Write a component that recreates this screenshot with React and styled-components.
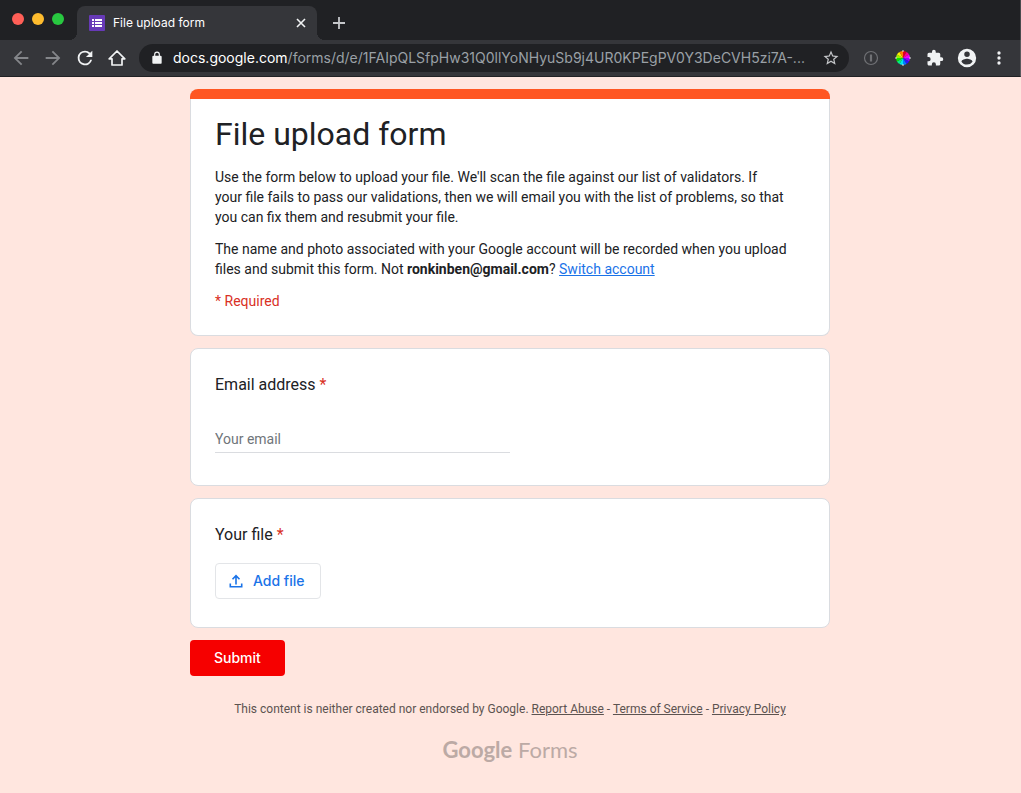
import React from "react";
import styled, { createGlobalStyle } from "styled-components";

const GlobalStyle = createGlobalStyle`
  *, *::before, *::after { box-sizing: border-box; }
  body {
    margin: 0;
    background: #ffe6df;
    color: #202124;
    font-family: Roboto, "Liberation Sans", sans-serif;
    font-size: 14px;
    line-height: 20px;
  }
  h1, h2, p { margin: 0; font-weight: 400; }
  button, input { font: inherit; }
`;

const Window = styled.div`
  min-height: 100vh;
  display: flex;
  flex-direction: column;
`;

const TabStrip = styled.div`
  display: flex;
  align-items: flex-end;
  height: 40px;
  background: #202124;
  border-right: 1px solid #4a4b4e;
`;

const WindowControls = styled.div`
  display: flex;
  gap: 8px;
  padding: 0 13px 15px 12px;
`;

const Light = styled.span`
  width: 12px;
  height: 12px;
  border-radius: 50%;
  background: ${(p) => p.$color};
`;

const Tab = styled.div`
  position: relative;
  display: flex;
  align-items: center;
  width: 240px;
  height: 34px;
  padding: 0 8px 0 12px;
  border-radius: 8px 8px 0 0;
  background: #35363a;
  color: #fff;
  font: 12px/16px Inter, sans-serif;
  &::before, &::after {
    content: "";
    position: absolute;
    bottom: 0;
    width: 8px;
    height: 8px;
  }
  &::before { left: -8px; background: radial-gradient(circle at 0 0, #202124 8px, #35363a 8px); }
  &::after { right: -8px; background: radial-gradient(circle at 100% 0, #202124 8px, #35363a 8px); }
`;

const TabTitle = styled.span`
  flex: 1;
  margin-left: 8px;
`;

const IconButton = styled.button`
  display: flex;
  align-items: center;
  justify-content: center;
  flex: none;
  width: ${(p) => p.$size || 32}px;
  height: ${(p) => p.$size || 32}px;
  padding: 0;
  border: 0;
  background: none;
  color: ${(p) => p.$color || "#f1f3f4"};
`;

const NewTab = styled(IconButton)`
  margin: 0 0 1px 6px;
`;

const Toolbar = styled.div`
  display: flex;
  align-items: center;
  height: 37px;
  padding: 0 5px;
  background: #35363a;
  border-right: 1px solid #5a5b5e;
  border-bottom: 1px solid #202124;
`;

const AddressBar = styled.div`
  display: flex;
  align-items: center;
  flex: 1;
  min-width: 0;
  height: 28px;
  margin: 0 6px;
  padding: 0 2px 0 11px;
  border-radius: 14px;
  background: #202124;
`;

const Address = styled.a`
  flex: 1;
  min-width: 0;
  margin: 0 4px 0 9px;
  overflow: hidden;
  white-space: nowrap;
  color: #9aa0a6;
  text-decoration: none;
  font: 14px/20px Inter, sans-serif;
`;

const Host = styled.span`
  color: #fff;
`;

const PageArea = styled.div`
  padding: 12px 1px 12px 0;
`;

const Page = styled.main`
  display: flex;
  flex-direction: column;
  gap: 12px;
  max-width: 640px;
  margin: 0 auto;
`;

const Card = styled.section`
  padding: 24px 24px ${(p) => p.$bottom}px;
  border: 1px solid #dadce0;
  border-radius: 8px;
  background: #fff;
`;

const HeaderCard = styled.header`
  display: flex;
  flex-direction: column;
  gap: 12px;
  padding: 0 24px 24px;
  border: 1px solid #dadce0;
  border-top: 0;
  border-radius: 8px;
  background: #fff;
`;

const AccentBar = styled.div`
  height: 10px;
  margin: 0 -25px;
  border-radius: 8px 8px 0 0;
  background: #ff5722;
`;

const Title = styled.h1`
  padding: 3px 0 1px;
  font: 400 32px/40px Roboto, sans-serif;
`;

const Required = styled.p`
  color: #d93025;
`;

const Star = styled.span`
  color: #d93025;
`;

const TextLink = styled.a`
  color: #1a73e8;
  text-decoration: underline;
`;

const Question = styled.h2`
  font: 400 16px/24px Roboto, sans-serif;
`;

const EmailInput = styled.input`
  display: block;
  width: 50%;
  height: 26px;
  margin-top: 30px;
  padding: 0 0 2px;
  border: 0;
  border-bottom: 1px solid #dadce0;
  border-radius: 0;
  background: none;
  outline: none;
  &::placeholder { color: #70757a; opacity: 1; }
`;

const FileButton = styled.button`
  display: flex;
  align-items: center;
  gap: 8px;
  height: 36px;
  margin-top: 16px;
  padding: 0 15px 0 11px;
  border: 1px solid #e3e5e8;
  border-radius: 4px;
  background: #fff;
  color: #1a73e8;
  font: 500 14px/20px Inter, sans-serif;
`;

const SubmitButton = styled.button`
  align-self: flex-start;
  height: 36px;
  padding: 0 24px;
  border: 0;
  border-radius: 4px;
  background: #f60000;
  color: #fff;
  font: 500 14px/20px Inter, sans-serif;
`;

const Footer = styled.footer`
  display: flex;
  flex-direction: column;
  align-items: center;
  gap: 19px;
  padding-top: 13px;
  color: #5c5350;
  font-size: 12px;
  line-height: 16px;
  a { color: inherit; }
`;

const Brand = styled.p`
  color: #bcaaa5;
  font: 400 22px/28px Lato, sans-serif;
`;

const BrandName = styled.span`
  font-weight: 700;
`;

const Icon = ({ size = 20, path }) => (
  <svg width={size} height={size} viewBox="0 0 24 24" fill="currentColor" aria-hidden="true">
    <path d={path} />
  </svg>
);

const paths = {
  back: "M20 11H7.83l5.59-5.59L12 4l-8 8 8 8 1.41-1.41L7.83 13H20v-2z",
  forward: "M12 4l-1.41 1.41L16.17 11H4v2h12.17l-5.58 5.59L12 20l8-8z",
  reload: "M17.65 6.35A7.96 7.96 0 0 0 12 4a8 8 0 1 0 7.73 10h-2.08A6 6 0 1 1 12 6c1.66 0 3.14.69 4.22 1.78L13 11h7V4l-2.35 2.35z",
  lock: "M18 8h-1V6A5 5 0 0 0 7 6v2H6a2 2 0 0 0-2 2v10c0 1.100.9 2 2 2h12a2 2 0 0 0 2-2V10a2 2 0 0 0-2-2zM9 6a3 3 0 0 1 6 0v2H9V6z",
  star: "M22 9.240l-7.190-.62L12 2 9.190 8.630 2 9.240l5.460 4.730L5.820 21 12 17.270 18.180 21l-1.630-7.030L22 9.240zM12 15.400l-3.760 2.270 1-4.280-3.320-2.880 4.380-.38L12 6.100l1.710 4.040 4.380.38-3.320 2.880 1 4.280L12 15.400z",
  puzzle: "M20.500 11H19V7a2 2 0 0 0-2-2h-4V3.500a2.500 2.500 0 0 0-5 0V5H4a2 2 0 0 0-2 2v3.800h1.500a2.700 2.700 0 0 1 0 5.400H2V20c0 1.100.9 2 2 2h3.800v-1.500a2.700 2.700 0 0 1 5.400 0V22H17a2 2 0 0 0 2-2v-4h1.500a2.500 2.500 0 0 0 0-5z",
  account: "M12 2a10 10 0 1 0 0 20 10 10 0 0 0 0-20zm0 3a3 3 0 1 1 0 6 3 3 0 0 1 0-6zm0 14.200a7.200 7.200 0 0 1-6-3.220c.03-1.990 4-3.080 6-3.080s5.970 1.090 6 3.080a7.200 7.200 0 0 1-6 3.220z",
  more: "M12 8a2 2 0 1 0 0-4 2 2 0 0 0 0 4zm0 2a2 2 0 1 0 0 4 2 2 0 0 0 0-4zm0 6a2 2 0 1 0 0 4 2 2 0 0 0 0-4z",
};

const FormsIcon = () => (
  <svg width="16" height="16" viewBox="0 0 16 16" aria-hidden="true">
    <rect width="16" height="16" rx="1" fill="#673ab7" />
    <path fill="#fff" d="M3 4h2v2H3zM6 4h7v2H6zM3 7h2v2H3zM6 7h7v2H6zM3 10h2v2H3zM6 10h7v2H6z" />
  </svg>
);

const HomeIcon = () => (
  <svg width="18" height="18" viewBox="0 0 18 18" fill="none" stroke="currentColor" strokeWidth="1.700" aria-hidden="true">
    <path d="M1.200 9.800H4V16h10V9.800h2.800L9 2Z" strokeLinejoin="round" />
  </svg>
);

const PasswordIcon = () => (
  <svg width="16" height="16" viewBox="0 0 16 16" fill="none" stroke="currentColor" aria-hidden="true">
    <circle cx="8" cy="8" r="6.500" strokeWidth="1.200" />
    <path d="M8 4.500v7" strokeWidth="2.200" />
  </svg>
);

const wedgeColors = ["#e00020", "#ff0090", "#f000ff", "#9000ff", "#2a10ff", "#0080ff", "#00e8f0", "#00f080", "#10e000", "#a0f000", "#fff000", "#ff8000"];

const ColorWheelIcon = () => (
  <svg width="16" height="16" viewBox="-8 -8 16 16" aria-hidden="true">
    {wedgeColors.map((color, i) => (
      <path key={color} d="M0 0V-7A7 7 0 0 1 3.500 -6.060Z" fill={color} transform={`rotate(${i * 30})`} />
    ))}
    <path d="M0-8v2M0 6v2M-8 0h2M6 0h2" stroke="#ddd" />
  </svg>
);

const UploadIcon = () => (
  <svg width="18" height="18" viewBox="0 0 18 18" fill="none" stroke="currentColor" strokeWidth="1.600" aria-hidden="true">
    <path d="M9 12.500V4M5.500 7.200 9 3.700l3.500 3.500M3.300 11.500v3.200h11.400v-3.200" />
  </svg>
);

export default function App() {
  return (
    <>
      <GlobalStyle />
      <Window>
        <TabStrip>
          <WindowControls>
            <Light $color="#ff5f57" />
            <Light $color="#febc2e" />
            <Light $color="#28c840" />
          </WindowControls>
          <Tab>
            <FormsIcon />
            <TabTitle>File upload form</TabTitle>
            <IconButton $size={16} aria-label="Close tab">
              <svg width="10" height="10" viewBox="0 0 10 10" stroke="currentColor" strokeWidth="1.600" aria-hidden="true">
                <path d="m1 1 8 8M9 1 1 9" />
              </svg>
            </IconButton>
          </Tab>
          <NewTab aria-label="New tab" $color="#c5c7ca">
            <svg width="12" height="12" viewBox="0 0 12 12" stroke="currentColor" strokeWidth="1.800" aria-hidden="true">
              <path d="M6 0v12M0 6h12" />
            </svg>
          </NewTab>
        </TabStrip>
        <Toolbar>
          <IconButton aria-label="Back" $color="#84868a"><Icon size={22} path={paths.back} /></IconButton>
          <IconButton aria-label="Forward" $color="#84868a"><Icon size={22} path={paths.forward} /></IconButton>
          <IconButton aria-label="Reload"><Icon size={22} path={paths.reload} /></IconButton>
          <IconButton aria-label="Home"><HomeIcon /></IconButton>
          <AddressBar>
            <IconButton $size={14} aria-label="Site information"><Icon size={14} path={paths.lock} /></IconButton>
            <Address href="#address">
              <Host>docs.google.com</Host>/forms/d/e/1FAIpQLSfpHw31Q0llYoNHyuSb9j4UR0KPEgPV0Y3DeCVH5zi7A-...
            </Address>
            <IconButton aria-label="Bookmark" $color="#c5c7ca"><Icon size={18} path={paths.star} /></IconButton>
          </AddressBar>
          <IconButton aria-label="Password manager" $color="#707175"><PasswordIcon /></IconButton>
          <IconButton aria-label="Color picker"><ColorWheelIcon /></IconButton>
          <IconButton aria-label="Extensions"><Icon size={18} path={paths.puzzle} /></IconButton>
          <IconButton aria-label="Account"><Icon size={22} path={paths.account} /></IconButton>
          <IconButton aria-label="Menu"><Icon size={20} path={paths.more} /></IconButton>
        </Toolbar>
        <PageArea>
          <Page>
            <HeaderCard>
              <AccentBar />
              <Title>File upload form</Title>
              <p>
                Use the form below to upload your file. We'll scan the file against our list of validators. If<br />
                your file fails to pass our validations, then we will email you with the list of problems, so that<br />
                you can fix them and resubmit your file.
              </p>
              <p>
                The name and photo associated with your Google account will be recorded when you upload<br />
                files and submit this form. Not <b>ronkinben@gmail.com</b>? <TextLink href="#switch">Switch account</TextLink>
              </p>
              <Required>* Required</Required>
            </HeaderCard>
            <Card $bottom={32}>
              <Question><label htmlFor="email">Email address <Star>*</Star></label></Question>
              <EmailInput id="email" type="email" placeholder="Your email" />
            </Card>
            <Card $bottom={28}>
              <Question>Your file <Star>*</Star></Question>
              <FileButton type="button"><UploadIcon />Add file</FileButton>
            </Card>
            <SubmitButton type="button">Submit</SubmitButton>
            <Footer>
              <p>
                This content is neither created nor endorsed by Google. <a href="#report">Report Abuse</a> - <a href="#terms">Terms of Service</a> - <a href="#privacy">Privacy Policy</a>
              </p>
              <Brand><BrandName>Google</BrandName> Forms</Brand>
            </Footer>
          </Page>
        </PageArea>
      </Window>
    </>
  );
}
